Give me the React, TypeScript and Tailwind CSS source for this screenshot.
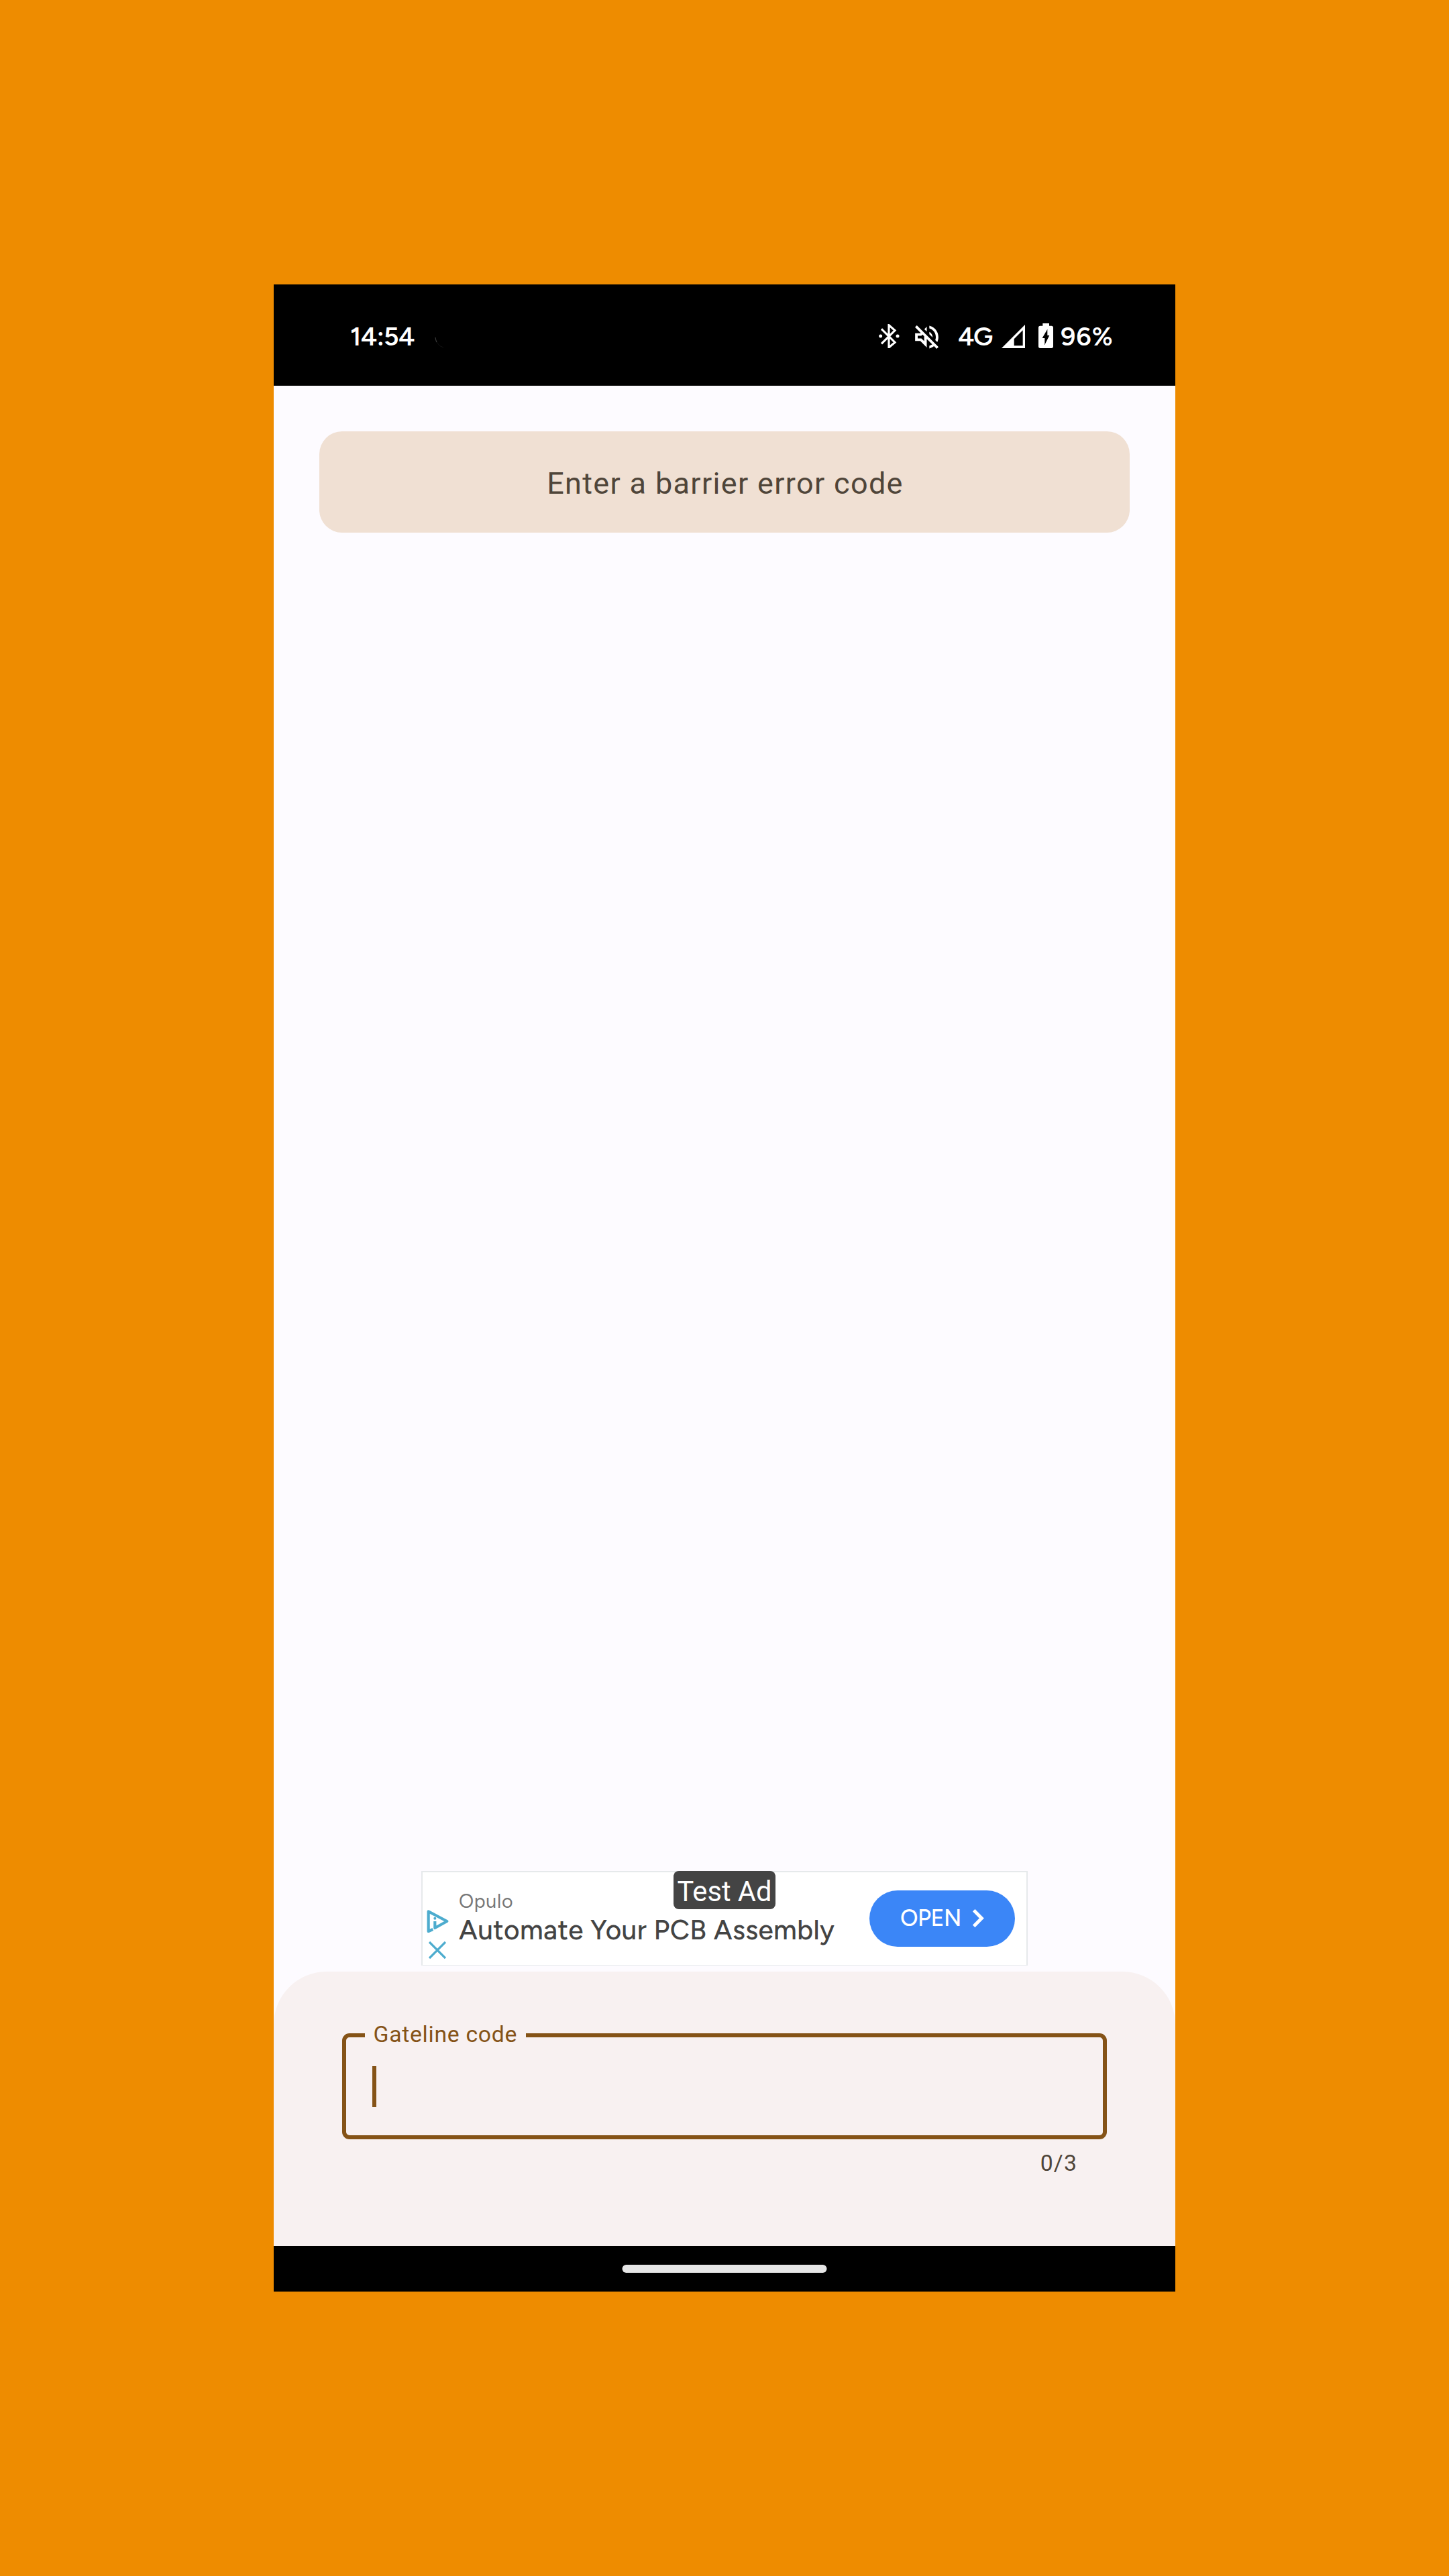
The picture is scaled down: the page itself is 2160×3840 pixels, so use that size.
function BluetoothIcon() {
  return (
    <svg className="w-[31px] h-[36px]" viewBox="89 129 93 108" fill="none">
      <path d="M101 151L161 211L134 234V134L161 158L101 217" stroke="#fff" strokeWidth="9.5" />
      <circle cx="97" cy="183" r="7.5" fill="#fff" />
      <circle cx="173" cy="183" r="7.5" fill="#fff" />
    </svg>
  );
}

function MutedIcon() {
  return (
    <svg className="w-[35px] h-[35px]" viewBox="2.93 2.93 18.14 18.14" fill="#fff">
      <path d="M4.34 2.93L2.93 4.34 7.29 8.7 7 9H3v6h4l5 5v-6.59l4.18 4.18c-.65.49-1.38.88-2.18 1.11v2.06c1.34-.3 2.57-.92 3.61-1.75l2.05 2.05 1.41-1.41L4.34 2.93zM10 15.17L7.83 13H5v-2h2.83l.88-.88L10 11.41v3.76zM19 12c0 .82-.15 1.61-.41 2.34l1.53 1.53c.56-1.17.88-2.48.88-3.87 0-4.28-2.99-7.86-7-8.77v2.06c2.89.86 5 3.54 5 6.71zM12 4l-1.88 1.88L12 7.76V4zM16.5 12c0-1.77-1.02-3.29-2.5-4.03v1.79l2.48 2.48c.01-.08.02-.16.02-.24z" />
    </svg>
  );
}

function SignalIcon() {
  return (
    <svg className="w-[35px] h-[35px]" viewBox="638 131 105 105" fill="#fff" fillRule="evenodd">
      <path d="M638 236L743 131V236ZM694 225H733V156L694 195Z" />
    </svg>
  );
}

function BatteryIcon() {
  return (
    <svg className="w-[22px] h-[37px]" viewBox="804 126 66 111" fill="#fff" fillRule="evenodd">
      <path d="M823 126H852V137H862Q870 137 870 145V229Q870 237 862 237H812Q804 237 804 229V145Q804 137 812 137H823ZM844 152L821 192H832V222L853 180H844Z" />
    </svg>
  );
}

function AdChoicesIcon() {
  return (
    <svg className="w-[33px] h-[34px]" viewBox="77 231 99 102" fill="none" stroke="#4dacce" strokeLinejoin="round">
      <path d="M105 318L85 327V238L168 282L114 312V282" strokeWidth="12.5" />
      <circle cx="114" cy="269" r="6" fill="#4dacce" stroke="none" />
    </svg>
  );
}

function CloseIcon() {
  return (
    <svg className="w-[26px] h-[26px]" viewBox="88 372 78 78" fill="none">
      <path d="M91 375L163 447M163 375L91 447" stroke="#4dacce" strokeWidth="10" />
    </svg>
  );
}

function ChevronIcon() {
  return (
    <svg className="w-[17px] h-[27px]" viewBox="630 228 51 81" fill="none">
      <path d="M635 233L670 268.500L635 304" stroke="#fff" strokeWidth="15" />
    </svg>
  );
}

function StatusBar() {
  return (
    <header className="flex h-[151px] items-start bg-black pl-[114px] font-[Figtree,Lato,sans-serif] text-[39px] leading-[40px] font-semibold text-white">
      <span className="mt-[58px] w-[100px] tracking-[-0.6px]">14:54</span>
      <svg className="mt-[78px] ml-[26px] h-[17px] w-[14px]" viewBox="0 0 14 17" fill="none">
        <path d="M1 1Q1.500 5 3 8" stroke="#3c3c3c" strokeWidth="1.2" />
        <path d="M3 8Q7 15 13 16" stroke="#121212" />
      </svg>
      <div className="mt-[58px] ml-[648px] flex items-start">
        <div className="mt-px w-[54px]"><BluetoothIcon /></div>
        <div className="mt-[3px] w-[64px]"><MutedIcon /></div>
        <span className="w-[65px] tracking-[-1.5px]">4G</span>
        <div className="mt-[2px] w-[55px]"><SignalIcon /></div>
        <div className="w-[33px]"><BatteryIcon /></div>
        <span className="tracking-[0.9px]">96%</span>
      </div>
    </header>
  );
}

function AdBanner() {
  return (
    <section className="relative mx-auto flex h-[141px] w-[904px] border-2 border-b border-[#e6e9eb] bg-white font-[Figtree,Lato,sans-serif]">
      <div className="mt-[56px] ml-[6px] flex w-[48px] flex-col gap-[13px]">
        <AdChoicesIcon />
        <div className="ml-[3px]"><CloseIcon /></div>
      </div>
      <div className="w-[612px] pt-[28px] whitespace-nowrap">
        <p className="text-[28.5px] leading-[30px] tracking-[0.7px] text-[#777]">Opulo</p>
        <p className="mt-[6px] text-[40.5px] leading-[44px] font-medium tracking-[0.4px] text-[#444]">
          Automate Your PCB Assembly
        </p>
      </div>
      <button className="mt-[27px] flex h-[84px] w-[217px] items-center rounded-full bg-[#3b86f7] pb-px pl-[46px] text-[34px] font-medium text-white">
        <span className="w-[108px] text-left tracking-[-0.5px]">OPEN</span>
        <ChevronIcon />
      </button>
      <span className="absolute -top-[2px] left-[374px] h-[57px] w-[152px] rounded-[8px] bg-[#444] text-center font-[Roboto,sans-serif] text-[41.6px] leading-[62px] whitespace-nowrap text-white">
        Test Ad
      </span>
    </section>
  );
}

function CodeSheet() {
  return (
    <section className="mt-[9px] h-[409px] rounded-t-[79px] bg-[#f8f1f1] px-[102px] pt-[73px]">
      <fieldset className="h-[177px] rounded-[11px] border-[6px] border-[#855317] pl-[39px]">
        <legend className="-ml-[11px] h-[44px] w-[240px] pb-[2px] pl-[12.5px] text-[33.75px] leading-[42px] tracking-[0.7px] whitespace-nowrap text-[#855317]">
          Gateline code
        </legend>
        <div className="mt-[24px] h-[61px] w-[6px] bg-[#855317]" />
      </fieldset>
      <p className="mt-[16px] pr-[44px] text-right text-[33.75px] leading-[40px] tracking-[1.125px] text-[#4f4539]">0/3</p>
    </section>
  );
}

export default function App() {
  return (
    <div className="h-[3840px] w-[2160px] bg-[#ee8c00] pt-[424px] font-[Roboto,sans-serif]">
      <div className="mx-auto flex h-[2992px] w-[1344px] flex-col bg-[#fdfbff]">
        <StatusBar />
        <main className="flex flex-1 flex-col">
          <div className="mx-[68px] mt-[68px] flex h-[151px] items-center justify-center rounded-[34px] bg-[#f0e0d3] pt-[4px] pl-[2px] text-[45px] leading-[60px] tracking-[1.33px] text-[#4f4539]">
            Enter a barrier error code
          </div>
          <div className="flex-1" />
          <AdBanner />
          <CodeSheet />
        </main>
        <footer className="flex h-[68px] items-center justify-center bg-black">
          <div className="h-[12px] w-[305px] -translate-x-[0.5px] rounded-full bg-[#e6e6e6]" />
        </footer>
      </div>
    </div>
  );
}
